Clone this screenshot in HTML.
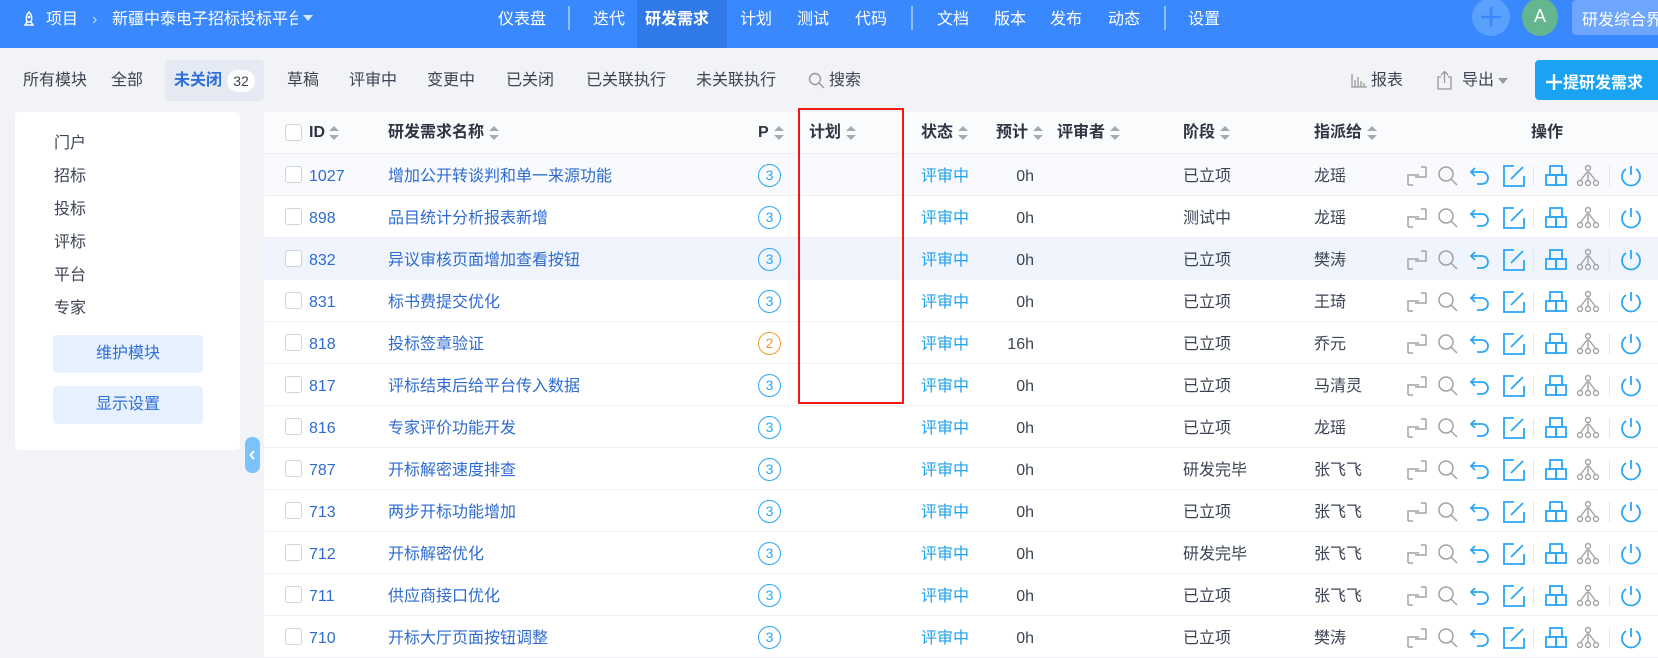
<!DOCTYPE html>
<html><head><meta charset="utf-8"><style>
*{margin:0;padding:0;box-sizing:border-box}
body{width:1658px;height:642px;overflow:hidden;background:#f2f3f6;font-family:"Liberation Sans","Noto Sans CJK SC",sans-serif;font-size:16px;color:#333;position:relative}
.a{position:absolute;white-space:nowrap}
.top{position:absolute;left:0;top:0;width:1658px;height:48px;background:#3a88fd;color:#fff}
.top .a{top:9px;font-size:16px;line-height:22px}
.sep{position:absolute;top:6px;width:2px;height:24px;background:rgba(255,255,255,.45)}
.sub .a{top:70px;font-size:16px;line-height:22px;color:#3c4353}
.side{position:absolute;left:15px;top:112px;width:225px;height:338px;background:#fff;border-radius:4px}
.side .it{position:absolute;left:39px;font-size:16px;color:#3c4353}
.sbtn{position:absolute;left:38px;width:150px;height:38px;background:#e6f0fe;border-radius:4px;color:#2e6fd8;text-align:center;line-height:38px;font-size:16px}
.tbl{position:absolute;left:264px;top:112px;width:1394px;height:530px;background:#fff}
.hd{position:absolute;left:0;top:0;width:1394px;height:42px;background:#fafbfd;border-bottom:1px solid #eef0f4}
.hd .a{top:10px;height:22px;line-height:22px;font-weight:bold;color:#2f3542;font-size:16px;display:flex;align-items:center}
.srt{display:block;width:10px;height:14px;margin-left:5px;position:relative}
.srt:before,.srt:after{content:"";position:absolute;left:0;border-left:5px solid transparent;border-right:5px solid transparent}
.srt:before{top:0;border-bottom:5px solid #a4a9b3}
.srt:after{bottom:0;border-top:5px solid #a4a9b3}
.row{position:absolute;left:0;width:1394px;height:42px;border-bottom:1px solid #eef0f4}
.row .a{top:12px;line-height:22px;height:22px}
.cb{position:absolute;left:21px;top:12px;width:17px;height:17px;border:1px solid #cfd3da;border-radius:3px;background:#fff}
.id{left:45px;color:#2e6bd0}
.nm{left:124px;color:#2e6bd0}
.pc{position:absolute;left:494px;top:10px;width:23px;height:23px;border:1.5px solid #2ba6f5;border-radius:50%;color:#2ba6f5;font-size:14px;text-align:center;line-height:20px}
.st{left:657px;color:#1ea1ee}
.hr{left:680px;width:90px;text-align:right;color:#3c4353}
.stg{left:919px;color:#3c4353}
.as{left:1050px;color:#3c4353}
.ic{position:absolute;top:10px}
</style></head><body>
<div class="top">
<svg class="a" style="left:23px;top:11px" width="12" height="16" viewBox="0 0 12 16"><path d="M6 1C3 4 3 8 4 11h4c1-3 1-7-2-10z M4 11l-2 3h8l-2-3" fill="none" stroke="#fff" stroke-width="1.5"/><circle cx="6" cy="6" r="1.3" fill="#fff"/></svg>
<span class="a" style="left:46px">项目</span>
<span class="a" style="left:92px;opacity:.7">›</span>
<span class="a" style="left:112px;width:186px;overflow:hidden">新疆中泰电子招标投标平台</span>
<span class="a" style="left:303px;top:15px;border-left:5px solid transparent;border-right:5px solid transparent;border-top:6px solid rgba(255,255,255,.8);width:0;height:0"></span>
<span class="a" style="left:498px">仪表盘</span>
<div class="sep" style="left:568px"></div>
<span class="a" style="left:593px">迭代</span>
<div style="position:absolute;left:637px;top:0;width:90px;height:48px;background:#2f7ae8"></div>
<span class="a" style="left:645px;font-weight:bold">研发需求</span>
<span class="a" style="left:740px">计划</span>
<span class="a" style="left:797px">测试</span>
<span class="a" style="left:855px">代码</span>
<div class="sep" style="left:911px"></div>
<span class="a" style="left:937px">文档</span>
<span class="a" style="left:994px">版本</span>
<span class="a" style="left:1050px">发布</span>
<span class="a" style="left:1108px">动态</span>
<div class="sep" style="left:1164px"></div>
<span class="a" style="left:1188px">设置</span>
<div style="position:absolute;left:1472px;top:-2px;width:38px;height:38px;border-radius:50%;background:#5aa0fd"></div>
<svg class="a" style="left:1479px;top:5px" width="24" height="24"><path d="M12 2v20M2 12h20" stroke="#3a88fd" stroke-width="2.5"/></svg>
<div style="position:absolute;left:1522px;top:-2px;width:36px;height:38px;border-radius:50%;background:#63b68d;text-align:center;line-height:36px;font-size:18px">A</div>
<div style="position:absolute;left:1572px;top:0;width:90px;height:35px;background:#6ea6fd;border-radius:4px;padding:6px 0 0 10px;white-space:nowrap;overflow:hidden">研发综合界</div>
</div>
<div class="sub">
<span class="a" style="left:23px">所有模块</span>
<span class="a" style="left:111px">全部</span>
<div style="position:absolute;left:165px;top:60px;width:99px;height:41px;background:#e5eaf2;border-radius:4px"></div>
<span class="a" style="left:174px;color:#2e6fd8;font-weight:bold">未关闭</span>
<span class="a" style="left:227px;top:70px;width:28px;height:22px;border-radius:11px;background:#fff;font-size:14px;text-align:center;color:#3c4353">32</span>
<span class="a" style="left:287px">草稿</span>
<span class="a" style="left:349px">评审中</span>
<span class="a" style="left:427px">变更中</span>
<span class="a" style="left:506px">已关闭</span>
<span class="a" style="left:586px">已关联执行</span>
<span class="a" style="left:696px">未关联执行</span>
<svg class="a" style="left:808px;top:72px" width="17" height="17"><circle cx="7" cy="7" r="5.5" fill="none" stroke="#999" stroke-width="1.4"/><path d="M11 11l5 5" stroke="#999" stroke-width="1.4"/></svg>
<span class="a" style="left:829px">搜索</span>
<svg class="a" style="left:1351px;top:74px" width="16" height="14"><path d="M1 0v13h15M4 6v7M7 3v10M10 7v6M13 9v4" stroke="#999" stroke-width="1.3" fill="none"/></svg>
<span class="a" style="left:1371px">报表</span>
<svg class="a" style="left:1436px;top:70px" width="17" height="20"><path d="M5 7H2v12h13V7h-3M8.5 13V2M5 5l3.5-3.5L12 5" stroke="#999" stroke-width="1.3" fill="none"/></svg>
<span class="a" style="left:1462px">导出</span>
<span class="a" style="left:1498px;top:78px;border-left:5px solid transparent;border-right:5px solid transparent;border-top:6px solid #999;width:0;height:0"></span>
<div style="position:absolute;left:1535px;top:60px;width:130px;height:40px;background:#1aa3f3;border-radius:4px;color:#fff;font-weight:bold;padding:9px 0 0 10px;white-space:nowrap">
<svg style="vertical-align:-3px" width="18" height="18"><path d="M9 1v16M1 9h16" stroke="#fff" stroke-width="2.4"/></svg>提研发需求</div>
</div>
<div class="side">
<span class="it" style="top:17px">门户</span>
<span class="it" style="top:50px">招标</span>
<span class="it" style="top:83px">投标</span>
<span class="it" style="top:116px">评标</span>
<span class="it" style="top:149px">平台</span>
<span class="it" style="top:182px">专家</span>
<div class="sbtn" style="top:223px">维护模块</div>
<div class="sbtn" style="top:274px">显示设置</div>
</div>
<div style="position:absolute;left:245px;top:437px;width:15px;height:36px;background:#7cc2fa;border-radius:7px"></div>
<svg class="a" style="left:248px;top:449px" width="9" height="12"><path d="M6 2L2.5 6 6 10" stroke="#fff" stroke-width="2" fill="none"/></svg>
<div class="tbl">
<div class="hd">
<div class="cb"></div>
<span class="a" style="left:45px">ID<span class="srt" style="margin-left:4px"></span></span>
<span class="a" style="left:124px">研发需求名称<span class="srt"></span></span>
<span class="a" style="left:494px">P<span class="srt"></span></span>
<span class="a" style="left:545px">计划<span class="srt"></span></span>
<span class="a" style="left:657px">状态<span class="srt"></span></span>
<span class="a" style="left:732px">预计<span class="srt"></span></span>
<span class="a" style="left:793px">评审者<span class="srt"></span></span>
<span class="a" style="left:919px">阶段<span class="srt"></span></span>
<span class="a" style="left:1050px">指派给<span class="srt"></span></span>
<span class="a" style="left:1267px">操作</span>
</div>
<div id="rows"></div>
</div>
<div style="position:absolute;left:798px;top:108px;width:106px;height:296px;border:2px solid #f01818"></div>
<script>
var d=[["1027","增加公开转谈判和单一来源功能",3,"0h","已立项","龙瑶"],["898","品目统计分析报表新增",3,"0h","测试中","龙瑶"],["832","异议审核页面增加查看按钮",3,"0h","已立项","樊涛"],["831","标书费提交优化",3,"0h","已立项","王琦"],["818","投标签章验证",2,"16h","已立项","乔元"],["817","评标结束后给平台传入数据",3,"0h","已立项","马清灵"],["816","专家评价功能开发",3,"0h","已立项","龙瑶"],["787","开标解密速度排查",3,"0h","研发完毕","张飞飞"],["713","两步开标功能增加",3,"0h","已立项","张飞飞"],["712","开标解密优化",3,"0h","研发完毕","张飞飞"],["711","供应商接口优化",3,"0h","已立项","张飞飞"],["710","开标大厅页面按钮调整",3,"0h","已立项","樊涛"]];
var g="#a3a3a3",b="#2ba6f5";
var icons='<svg class="ic" style="left:1141px" width="24" height="24"><path d="M3 21V11h11M8 21H3 M21 3v10H10M16 3h5" stroke="'+g+'" stroke-width="1.5" fill="none"/></svg>'+
'<svg class="ic" style="left:1172px" width="24" height="24"><circle cx="10" cy="10" r="7" stroke="'+g+'" stroke-width="1.5" fill="none"/><path d="M15 15l6 6" stroke="'+g+'" stroke-width="1.5"/></svg>'+
'<svg class="ic" style="left:1204px" width="24" height="24"><path d="M7 4L3 8l4 4M3 8h11a6 6 0 0 1 0 12H9" stroke="'+b+'" stroke-width="1.8" fill="none"/></svg>'+
'<svg class="ic" style="left:1238px" width="24" height="24"><path d="M12 2H2v20h20V12M9 15l12-12" stroke="'+b+'" stroke-width="1.8" fill="none"/></svg>'+
'<div style="position:absolute;left:1269px;top:12px;width:1px;height:20px;background:#e3e6ea"></div>'+
'<svg class="ic" style="left:1280px" width="24" height="24"><rect x="6" y="2" width="12" height="9" stroke="'+b+'" stroke-width="1.8" fill="none"/><rect x="2" y="11" width="10" height="10" stroke="'+b+'" stroke-width="1.8" fill="none"/><rect x="12" y="11" width="10" height="10" stroke="'+b+'" stroke-width="1.8" fill="none"/></svg>'+
'<svg class="ic" style="left:1312px" width="24" height="24"><circle cx="12" cy="4" r="2.5" stroke="'+g+'" stroke-width="1.4" fill="none"/><circle cx="4" cy="19" r="2.5" stroke="'+g+'" stroke-width="1.4" fill="none"/><circle cx="12" cy="19" r="2.5" stroke="'+g+'" stroke-width="1.4" fill="none"/><circle cx="20" cy="19" r="2.5" stroke="'+g+'" stroke-width="1.4" fill="none"/><path d="M12 7v9M11 8l-6 8M13 8l6 8" stroke="'+g+'" stroke-width="1.4"/></svg>'+
'<div style="position:absolute;left:1345px;top:12px;width:1px;height:20px;background:#e3e6ea"></div>'+
'<svg class="ic" style="left:1355px" width="24" height="24"><path d="M12 2v9M7 5a9 9 0 1 0 10 0" stroke="'+b+'" stroke-width="1.8" fill="none"/></svg>';
var h="";
d.forEach(function(r,i){var bg=i==0?"#f8fafe":(i==2?"#f0f5fd":"#fff");
var pc=r[2]==2?"border-color:#f39a2c;color:#f39a2c":"";
h+='<div class="row" style="top:'+(42+42*i)+'px;background:'+bg+'"><div class="cb"></div><span class="a id">'+r[0]+'</span><span class="a nm">'+r[1]+'</span><div class="pc" style="'+pc+'">'+r[2]+'</div><span class="a st">评审中</span><span class="a hr">'+r[3]+'</span><span class="a stg">'+r[4]+'</span><span class="a as">'+r[5]+'</span>'+icons+'</div>';});
document.getElementById("rows").innerHTML=h;
</script>
</body></html>
